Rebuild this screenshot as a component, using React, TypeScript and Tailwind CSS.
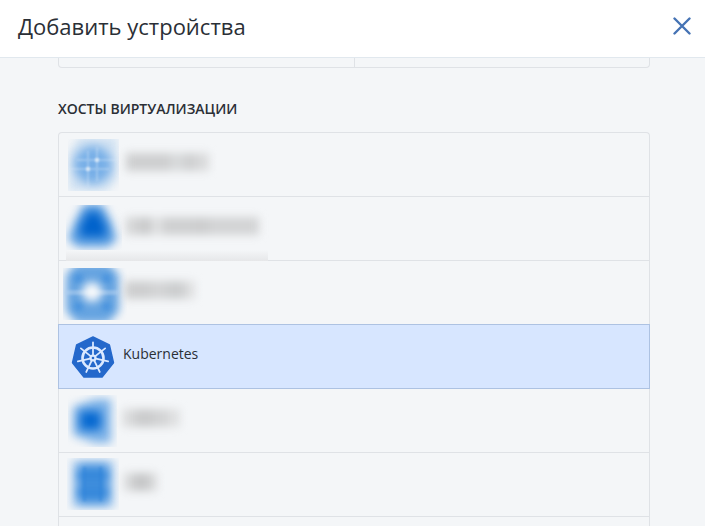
import { useState } from "react";
import type { ReactNode } from "react";

interface Host {
    id : string,
    name? : string,
    icon : ReactNode,
    label? : ReactNode
}

interface LabelBlurProps {
    width : number,
    bars : [number, number, string][]
}

// hidden vendor name: soft grey columns instead of letters
function LabelBlur({ width, bars } : LabelBlurProps) {
    return(
        <svg className="h-[63px] shrink-0 overflow-visible" width={width} viewBox={`0 0 ${width} 63`} aria-hidden="true">
            <g filter="url(#soft-label)">
                {bars.map(([x, w, fill]) => (
                    <rect key={x} x={x} y="20" width={w} height="18" fill={fill} />
                ))}
            </g>
        </svg>
    );
}

function IconFrame({ children } : { children : ReactNode }) {
    return(
        <svg className="w-16 h-[63px] shrink-0 overflow-visible" viewBox="0 0 64 63" aria-hidden="true">
            {children}
        </svg>
    );
}

function RoundIcon() {
    return(
        <IconFrame>
            <clipPath id="clip-round"><rect x="9" y="6" width="51" height="52" /></clipPath>
            <g clipPath="url(#clip-round)">
                <path d="M20 4H58V46L48 58H10V20Z" fill="#cfe1f2" filter="url(#soft-4)" />
                <circle cx="34" cy="32" r="19" fill="#78afe7" filter="url(#soft-5)" />
                <g stroke="#dcebf9" strokeWidth="2" opacity="0.35" filter="url(#soft-1)">
                    <path d="M38 14V48M18 27H58M29 18V54M10 36H50" />
                </g>
                <circle cx="38" cy="27" r="2" fill="#e4effa" filter="url(#soft-1)" />
                <circle cx="29" cy="36" r="2" fill="#e4effa" filter="url(#soft-1)" />
            </g>
        </IconFrame>
    );
}

function BellIcon() {
    return(
        <IconFrame>
            <clipPath id="clip-bell"><rect x="7" y="8" width="56" height="52" /></clipPath>
            <g clipPath="url(#clip-bell)">
                <path d="M25 7H43L52 24L58 42L49 50H19L9 42L16 24Z" fill="#5c9fe2" filter="url(#soft-5)" />
                <path d="M29 15H39L47 30V40H21V30Z" fill="#0062cb" filter="url(#soft-5)" />
            </g>
        </IconFrame>
    );
}

function RingIcon() {
    return(
        <IconFrame>
            <clipPath id="clip-ring"><rect x="4" y="7" width="64" height="52" /></clipPath>
            <g clipPath="url(#clip-ring)">
                <path d="M18 2H49L60 14V50L49 62H18L7 50V14Z" fill="#66a4e1" filter="url(#soft-4)" />
                <g fill="#3a8bdc" filter="url(#soft-3)">
                    <rect x="16" y="14" width="7" height="7" />
                    <rect x="44" y="14" width="7" height="7" />
                    <rect x="16" y="42" width="7" height="7" />
                    <rect x="44" y="42" width="7" height="7" />
                </g>
                <rect x="6" y="29" width="54" height="5" fill="#b5d2f0" opacity="0.5" filter="url(#soft-1)" />
                <circle cx="33" cy="31" r="10" fill="#f6f8fa" filter="url(#soft-4)" />
            </g>
        </IconFrame>
    );
}

function KubernetesIcon() {
    return(
        <IconFrame>
            <path
                d="M34 12L50.4 19.9L54.5 37.7L43.1 52H24.9L13.5 37.7L17.6 19.9Z"
                fill="#2468cb"
                stroke="#2468cb"
                strokeWidth="1.4"
                strokeLinejoin="round"
            />
            <g fill="none" stroke="#dbe9ff" strokeLinecap="round">
                <circle cx="34" cy="33" r="10.5" strokeWidth="2.6" />
                {[0, 1, 2, 3, 4, 5, 6].map((n) => (
                    <path key={n} d="M34 30V17.5" strokeWidth="1.8" transform={`rotate(${(n * 360) / 7} 34 33)`} />
                ))}
            </g>
            <circle cx="34" cy="33" r="3.6" fill="#dbe9ff" />
            <circle cx="34" cy="33" r="1.3" fill="#2468cb" />
        </IconFrame>
    );
}

function WindowIcon() {
    return(
        <IconFrame>
            <clipPath id="clip-window"><rect x="9" y="6" width="49" height="52" /></clipPath>
            <g clipPath="url(#clip-window)">
                <path d="M14 18L36 10H52V54H36L14 46Z" fill="#7cb2e8" filter="url(#soft-5)" />
                <path d="M21 22H42V41H21Z" fill="#0568d0" filter="url(#soft-5)" />
            </g>
        </IconFrame>
    );
}

function GridIcon() {
    return(
        <IconFrame>
            <clipPath id="clip-grid"><rect x="8" y="5" width="52" height="52" /></clipPath>
            <g clipPath="url(#clip-grid)">
                <rect x="12" y="7" width="44" height="48" fill="#c3dbf3" filter="url(#soft-4)" />
                <rect x="18" y="11" width="32" height="40" fill="#3e8ddc" filter="url(#soft-5)" />
                <g fill="#2a81d9" opacity="0.5" filter="url(#soft-3)">
                    <rect x="18" y="20" width="32" height="5" />
                    <rect x="18" y="37" width="32" height="5" />
                </g>
                <g fill="#2a81d9" opacity="0.35" filter="url(#soft-1)">
                    <rect x="24" y="14" width="3" height="34" />
                    <rect x="40" y="14" width="3" height="34" />
                </g>
            </g>
        </IconFrame>
    );
}

const hosts : Host[] = [
    {
        id: "round",
        icon: <RoundIcon />,
        label: <LabelBlur width={100} bars={[[3, 24, "#cecfd0"], [27, 20, "#cecfd0"], [47, 14, "#d7d9da"], [61, 12, "#cfd0d1"], [73, 13, "#d9dadb"]]} />
    },
    {
        id: "bell",
        icon: <BellIcon />,
        label: <LabelBlur width={150} bars={[[3, 13, "#d4d5d6"], [16, 12, "#cacbcc"], [28, 12, "#dedfe0"], [40, 30, "#cfd0d1"], [70, 16, "#cdcecf"], [86, 50, "#d3d4d5"]]} />
    },
    {
        id: "ring",
        icon: <RingIcon />,
        label: <LabelBlur width={90} bars={[[2, 25, "#cdcecf"], [27, 17, "#d3d4d5"], [44, 18, "#cccecf"], [62, 10, "#dedfe0"]]} />
    },
    { id: "kubernetes", name: "Kubernetes", icon: <KubernetesIcon /> },
    {
        id: "window",
        icon: <WindowIcon />,
        label: <LabelBlur width={80} bars={[[0, 12, "#d9dadb"], [12, 19, "#cbcccd"], [31, 14, "#d3d4d5"], [45, 12, "#dfe0e1"]]} />
    },
    {
        id: "grid",
        icon: <GridIcon />,
        label: <LabelBlur width={60} bars={[[1, 9, "#d8d9da"], [10, 16, "#c6c7c8"], [26, 8, "#d8d9da"]]} />
    }
];

function SoftFilters() {
    return(
        <svg className="absolute w-0 h-0" colorInterpolationFilters="sRGB" aria-hidden="true">
            <filter id="soft-1" x="-50%" y="-50%" width="200%" height="200%"><feGaussianBlur stdDeviation="1" /></filter>
            <filter id="soft-3" x="-50%" y="-50%" width="200%" height="200%"><feGaussianBlur stdDeviation="3" /></filter>
            <filter id="soft-4" x="-50%" y="-50%" width="200%" height="200%"><feGaussianBlur stdDeviation="4" /></filter>
            <filter id="soft-5" x="-50%" y="-50%" width="200%" height="200%"><feGaussianBlur stdDeviation="5" /></filter>
            <filter id="soft-label" x="-50%" y="-80%" width="200%" height="260%"><feGaussianBlur stdDeviation="4" /></filter>
        </svg>
    );
}

export default function App() {

    const [selected, setSelected] = useState("kubernetes");

    return(
        <div className="relative flex h-screen flex-col overflow-hidden bg-[#f4f6f8] font-['Open_Sans','Noto_Sans',sans-serif] text-[#2b2f36]">
            <SoftFilters />
            <header className="flex h-[58px] shrink-0 items-center justify-between border-b border-[#e1e8ee] bg-white pr-[11px] pb-[5px] pl-[18px]">
                <h1 className="text-[22px] leading-8">Добавить устройства</h1>
                <button type="button" aria-label="Закрыть" className="flex size-6 items-center justify-center">
                    <svg className="size-[18px]" viewBox="0 0 18 18" fill="none" stroke="#4573b4" strokeWidth="2.4" strokeLinecap="round">
                        <path d="M1.5 1.5L16.5 16.5M16.5 1.5L1.5 16.5" />
                    </svg>
                </button>
            </header>

            <main className="min-h-0 flex-1 overflow-hidden pr-[55px] pl-[58px]">
                <div className="grid h-[10px] grid-cols-2 rounded-b border-x border-b border-[#dfe2e6]">
                    <div></div>
                    <div className="border-l border-[#dfe2e6]"></div>
                </div>

                <h2 className="mt-[31px] text-sm leading-5 font-semibold">ХОСТЫ ВИРТУАЛИЗАЦИИ</h2>

                <ul className="mt-[13px] rounded-t border-x border-t border-[#dfe2e6]">
                    {hosts.map((host) => (
                        <li key={host.id} className="flow-root h-16">
                            <button
                                type="button"
                                aria-label={host.name ?? host.id}
                                aria-pressed={selected === host.id}
                                onClick={() => setSelected(host.id)}
                                className={
                                    selected === host.id
                                        ? "relative -mx-px -mt-px flex h-[65px] w-[calc(100%+2px)] border border-[#adc2e2] bg-[#d7e6ff] text-left"
                                        : "relative flex h-16 w-full border-b border-[#dfe2e6] text-left"
                                }
                            >
                                {host.id === "bell" && (
                                    <span className="absolute -bottom-px left-[7px] h-[11px] w-[202px] bg-linear-to-b from-[#f4f6f8] to-[#e6e7e9]"></span>
                                )}
                                {host.icon}
                                {host.name ? <span className="pt-[19px] text-sm leading-5">{host.name}</span> : host.label}
                            </button>
                        </li>
                    ))}
                    <li className="h-16"></li>
                </ul>
            </main>
        </div>
    );
}
